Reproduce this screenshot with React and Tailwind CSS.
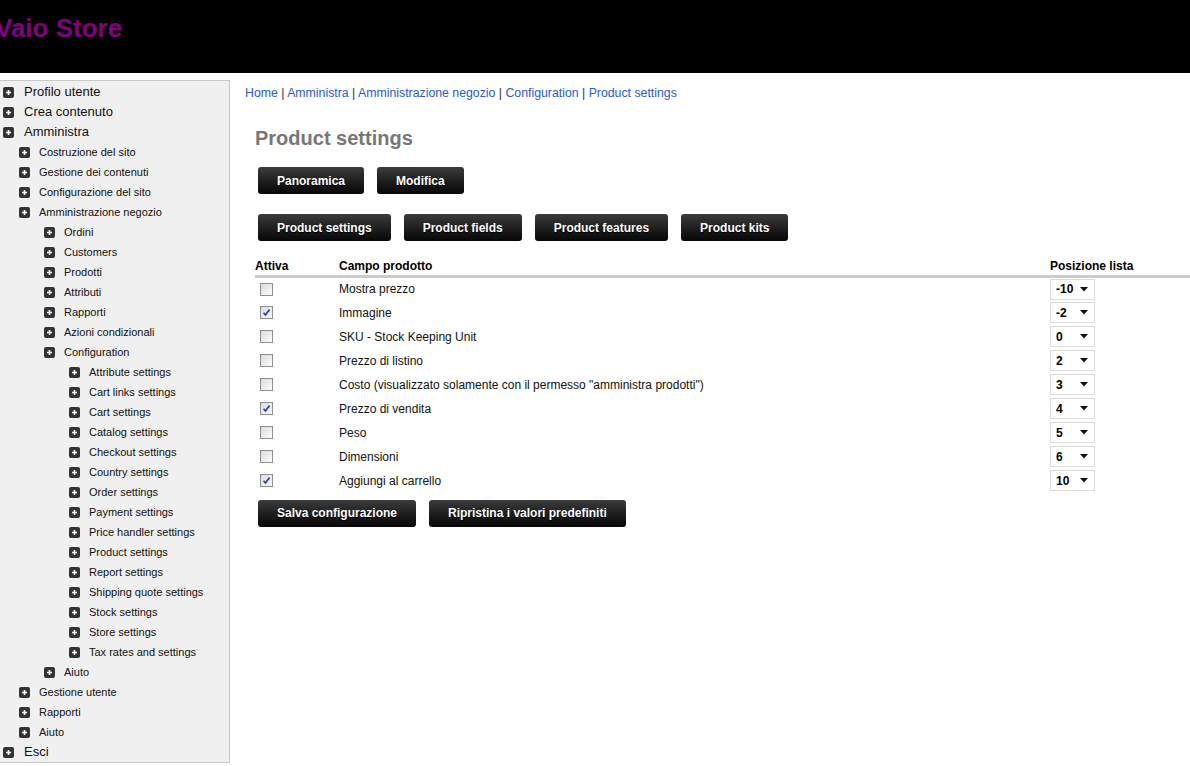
import React from "react";

const menu = [
  [0, "Profilo utente"],
  [0, "Crea contenuto"],
  [0, "Amministra"],
  [1, "Costruzione del sito"],
  [1, "Gestione dei contenuti"],
  [1, "Configurazione del sito"],
  [1, "Amministrazione negozio"],
  [2, "Ordini"],
  [2, "Customers"],
  [2, "Prodotti"],
  [2, "Attributi"],
  [2, "Rapporti"],
  [2, "Azioni condizionali"],
  [2, "Configuration"],
  [3, "Attribute settings"],
  [3, "Cart links settings"],
  [3, "Cart settings"],
  [3, "Catalog settings"],
  [3, "Checkout settings"],
  [3, "Country settings"],
  [3, "Order settings"],
  [3, "Payment settings"],
  [3, "Price handler settings"],
  [3, "Product settings"],
  [3, "Report settings"],
  [3, "Shipping quote settings"],
  [3, "Stock settings"],
  [3, "Store settings"],
  [3, "Tax rates and settings"],
  [2, "Aiuto"],
  [1, "Gestione utente"],
  [1, "Rapporti"],
  [1, "Aiuto"],
  [0, "Esci"],
];

const indent = ["pl-[3px]", "pl-[19px]", "pl-[44px]", "pl-[69px]"];

const fields = [
  ["Mostra prezzo", false, "-10"],
  ["Immagine", true, "-2"],
  ["SKU - Stock Keeping Unit", false, "0"],
  ["Prezzo di listino", false, "2"],
  ['Costo (visualizzato solamente con il permesso "amministra prodotti")', false, "3"],
  ["Prezzo di vendita", true, "4"],
  ["Peso", false, "5"],
  ["Dimensioni", false, "6"],
  ["Aggiungi al carrello", true, "10"],
];

const PlusIcon = () => (
  <span className="flex h-[11px] w-[11px] shrink-0 items-center justify-center rounded-[2px] bg-[#333]">
    <svg width="7" height="7" viewBox="0 0 7 7">
      <path d="M3.5 1v5M1 3.5h5" stroke="#fff" strokeWidth="1.6" />
    </svg>
  </span>
);

const Button = ({ children }) => (
  <button
    type="button"
    className="h-[27px] rounded-[3px] bg-gradient-to-b from-[#3c3c3c] to-[#070707] px-[19px] text-[12px] font-bold text-white [text-shadow:0_1px_1px_#000]"
  >
    {children}
  </button>
);

const Checkbox = ({ checked }) => (
  <span className="flex h-[13px] w-[13px] items-center justify-center border border-[#8f8f8f] bg-gradient-to-br from-[#dcdcdc] to-[#fbfbfb]">
    {checked && (
      <svg width="9" height="9" viewBox="0 0 9 9">
        <path d="M1.5 4.8l2 2.2 4-5.5" stroke="#2a3fa8" strokeWidth="1.7" fill="none" />
      </svg>
    )}
  </span>
);

const Select = ({ value }) => (
  <div className="flex h-[21px] w-[45px] items-center justify-between border border-[#dcdcdc] bg-white pl-[5px] pr-[6px] text-[12px] font-bold text-black">
    <span>{value}</span>
    <svg width="8" height="5" viewBox="0 0 8 5">
      <path d="M0 0h8L4 4.5z" fill="#111" />
    </svg>
  </div>
);

export default function App() {
  const crumbs = ["Home", "Amministra", "Amministrazione negozio", "Configuration", "Product settings"];
  return (
    <div className="min-h-[766px] bg-white font-['Liberation_Sans',Arial,sans-serif] text-black">
      <header className="h-[73px] overflow-hidden bg-black">
        <h1 className="ml-[-5px] pt-[12px] text-[26px] font-bold leading-[32px] text-[#800080]">Vaio Store</h1>
      </header>

      <div className="mt-[7px] flex items-start">
        <nav className="w-[230px] shrink-0 border border-l-0 border-[#c8c8c8] bg-[#f0f0f0] pt-[1px]">
          {menu.map(([lvl, label], i) => (
            <div key={i} className={`flex h-[20px] items-center ${indent[lvl]}`}>
              <PlusIcon />
              <span
                className={
                  lvl === 0
                    ? "ml-[10px] text-[13px] text-[#111]"
                    : "ml-[9px] text-[11px] text-[#111]"
                }
              >
                {label}
              </span>
            </div>
          ))}
        </nav>

        <main className="min-w-0 flex-1 pl-[15px]">
          <div className="pt-[5px] text-[12.3px] leading-[16px]">
            {crumbs.map((c, i) => (
              <span key={c}>
                {i > 0 && <span className="text-[#333]"> | </span>}
                <a className="text-[#2a5ad8]">{c}</a>
              </span>
            ))}
          </div>

          <div className="pl-[10px]">
            <h2 className="mt-[25px] text-[20px] font-bold leading-[24px] text-[#777]">Product settings</h2>

            <div className="ml-[3px] mt-[17px] flex gap-[13px]">
              <Button>Panoramica</Button>
              <Button>Modifica</Button>
            </div>

            <div className="ml-[3px] mt-[20px] flex gap-[13px]">
              <Button>Product settings</Button>
              <Button>Product fields</Button>
              <Button>Product features</Button>
              <Button>Product kits</Button>
            </div>

            <table className="mt-[16px] w-full border-collapse text-[12px]">
              <thead>
                <tr className="h-[19px] border-b-[3px] border-[#cccccc] text-left">
                  <th className="w-[84px] p-0 font-bold">Attiva</th>
                  <th className="p-0 font-bold">Campo prodotto</th>
                  <th className="w-[140px] p-0 font-bold">Posizione lista</th>
                </tr>
              </thead>
              <tbody>
                {fields.map(([label, checked, pos]) => (
                  <tr key={label} className="h-[24px]">
                    <td className="p-0 pl-[5px]">
                      <Checkbox checked={checked} />
                    </td>
                    <td className="p-0 text-[#111]">{label}</td>
                    <td className="p-0">
                      <Select value={pos} />
                    </td>
                  </tr>
                ))}
              </tbody>
            </table>

            <div className="ml-[3px] mt-[7px] flex gap-[13px]">
              <Button>Salva configurazione</Button>
              <Button>Ripristina i valori predefiniti</Button>
            </div>
          </div>
        </main>
      </div>
    </div>
  );
}
